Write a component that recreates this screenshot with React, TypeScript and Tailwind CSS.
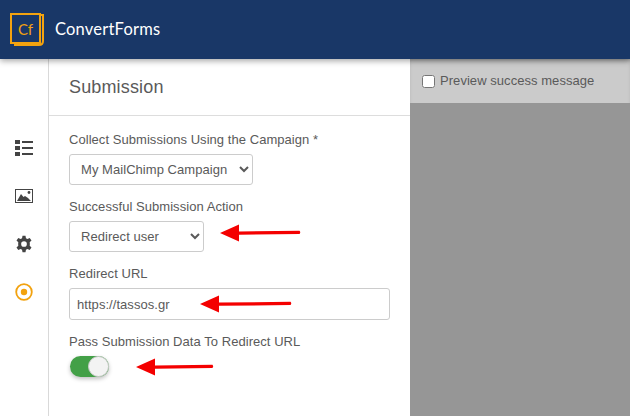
const Arrow = ({ width, className }: { width: number; className: string }) => (
    <svg width={width} height={18} viewBox={`0 0 ${width} 18`} className={`absolute ${className}`}>
        <path d={`M0 9 L19 0.5 L19 7.5 L${width - 1.5} 6.8 Q${width} 8.4 ${width - 1.5} 10 L19 10.8 L19 17.5 Z`} fill="#f40000" />
    </svg>
);

const Field = ({ label, children }: { label: string; children: React.ReactNode }) => (
    <div className="flex flex-col">
        <label className="text-[13px] leading-[15px] text-[#5a5a5a] tracking-[0.05px] mb-[7px]">{label}</label>
        {children}
    </div>
);

const selectClass =
    'h-[31px] rounded-[3px] border border-[#ccc] bg-white pl-[7px] text-[13px] text-[#5a5a5a] tracking-[0.05px] outline-none';

export default function App() {
    return (
        <div className="relative w-[630px] h-[416px] overflow-hidden bg-white flex flex-col font-['Liberation_Sans',Arial,sans-serif]">
            <header className="relative z-10 h-[59px] shrink-0 bg-[#193767] flex items-center pl-[10px] gap-[10px] shadow-[0_2px_6px_rgba(0,0,0,0.35)]">
                <svg width="35" height="35" viewBox="0 0 35 35">
                    <path d="M1 2 H30 V31 H1 Z" fill="none" stroke="#f2a20f" strokeWidth="2" />
                    <path d="M31 3 H33 V29 Q33 33 29 33 H5 V32" fill="none" stroke="#f2a20f" strokeWidth="2" />
                    <text x="8" y="23" fontSize="15" fill="#f2a20f" fontFamily="Lato, sans-serif">Cf</text>
                </svg>
                <span className="font-['Lato',sans-serif] text-[16.5px] text-white tracking-[0.2px]">ConvertForms</span>
            </header>

            <div className="flex flex-1 min-h-0">
                <nav className="w-[49px] shrink-0 border-r border-[#d9d9d9] flex flex-col items-center pt-[80px] pr-[1px] gap-[28px]">
                    <svg width="18" height="18" viewBox="0 0 18 18" fill="#444">
                        <rect x="0" y="1" width="5" height="4" />
                        <rect x="0" y="7" width="5" height="4" />
                        <rect x="0" y="13" width="5" height="4" />
                        <rect x="7" y="2" width="11" height="2" />
                        <rect x="7" y="8" width="11" height="2" />
                        <rect x="7" y="14" width="11" height="2" />
                    </svg>
                    <svg width="18" height="18" viewBox="0 0 18 18" className="mt-[2px]">
                        <rect x="0.5" y="2.5" width="17" height="13" fill="#fff" stroke="#444" />
                        <path d="M2 14 L6 7 L8.5 10 L10 9 L13 11 L16 14 Z" fill="#444" />
                        <circle cx="14" cy="5.5" r="1.4" fill="#444" />
                    </svg>
                    <svg width="18" height="18" viewBox="0 0 24 24" className="mt-[2px]" fill="#444">
                        <path fillRule="evenodd" d="M10 1 H14 L14.6 4.2 L16.6 5.2 L19.6 3.9 L22 7.4 L19.6 9.6 L19.8 12 L19.6 14.4 L22 16.6 L19.6 20.1 L16.6 18.8 L14.6 19.8 L14 23 H10 L9.4 19.8 L7.4 18.8 L4.4 20.1 L2 16.6 L4.4 14.4 L4.2 12 L4.4 9.6 L2 7.4 L4.4 3.9 L7.4 5.2 L9.4 4.2 Z M12 8.2 A3.8 3.8 0 1 0 12 15.8 A3.8 3.8 0 1 0 12 8.2 Z" />
                    </svg>
                    <svg width="18" height="18" viewBox="0 0 18 18" className="mt-[2px]">
                        <circle cx="9" cy="9" r="7.8" fill="none" stroke="#f2a20f" strokeWidth="1.8" />
                        <circle cx="9" cy="9" r="3.2" fill="#f2a20f" />
                    </svg>
                </nav>

                <main className="relative w-[361px] shrink-0">
                    <div className="h-[57px] border-b border-[#ddd] flex items-center pl-[20px] pt-[1px]">
                        <h2 className="text-[18px] text-[#5a5a5a] tracking-[0.15px]">Submission</h2>
                    </div>
                    <div className="flex flex-col gap-[14px] pl-[20px] pr-[20px] pt-[16px]">
                        <Field label="Collect Submissions Using the Campaign *">
                            <select className={`${selectClass} w-[184px]`} defaultValue="a">
                                <option value="a">My MailChimp Campaign</option>
                            </select>
                        </Field>
                        <Field label="Successful Submission Action">
                            <select className={`${selectClass} w-[135px]`} defaultValue="a">
                                <option value="a">Redirect user</option>
                            </select>
                        </Field>
                        <Field label="Redirect URL">
                            <input
                                readOnly
                                value="https://tassos.gr"
                                className="h-[32px] w-[321px] rounded-[3px] border border-[#ccc] bg-white px-[7px] text-[13px] text-[#5a5a5a] tracking-[0.05px] outline-none"
                            />
                        </Field>
                        <Field label="Pass Submission Data To Redirect URL">
                            <div className="relative h-[21px] w-[39px] ml-[1px] rounded-full bg-[#43a047] shadow-[0_2px_4px_rgba(0,0,0,0.25)]">
                                <div className="absolute right-0 top-0 h-[21px] w-[21px] rounded-full bg-[#f3f3f3] border border-[#ccc]" />
                            </div>
                        </Field>
                    </div>
                    <Arrow width={81} className="left-[171px] top-[165px]" />
                    <Arrow width={92} className="left-[151px] top-[236px]" />
                    <Arrow width={78} className="left-[87px] top-[299px]" />
                </main>

                <aside className="flex-1 flex flex-col bg-[#969696]">
                    <div className="h-[44px] bg-[#cbcbcb] flex items-center pl-[12px] gap-[5px] shadow-[inset_0_3px_4px_-2px_rgba(0,0,0,0.25)]">
                        <input type="checkbox" className="h-[13px] w-[13px] m-0" />
                        <span className="text-[13px] text-[#5a5a5a] tracking-[0.05px]">Preview success message</span>
                    </div>
                </aside>
            </div>
        </div>
    );
}
